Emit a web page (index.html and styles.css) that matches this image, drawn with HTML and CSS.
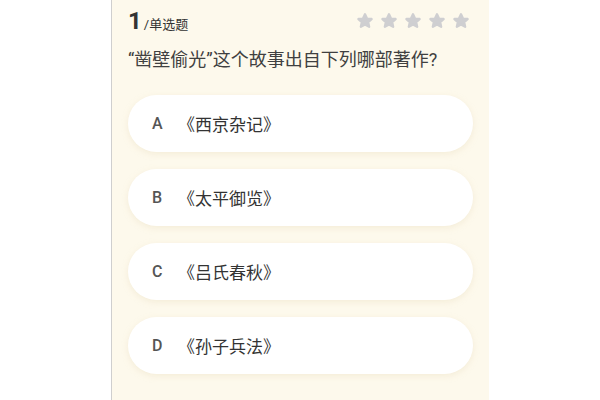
FILE: index.html
```html
<!DOCTYPE html>
<html lang="zh">
<head>
	<meta charset="UTF-8">
	<title>答题</title>
	<link rel="stylesheet" href="styles.css">
</head>
<body>
<div class="panel">
	<div class="head">
		<div class="num"><span class="no">1</span><span class="type">/单选题</span></div>
		<div class="stars">
			<svg class="star" viewBox="0 0 20 20"><path d="M10 2.5 L12.2 7.3 L17.3 7.8 L13.5 11.3 L14.6 16.4 L10 13.8 L5.4 16.4 L6.5 11.3 L2.7 7.8 L7.8 7.3 Z"/></svg>
			<svg class="star" viewBox="0 0 20 20"><path d="M10 2.5 L12.2 7.3 L17.3 7.8 L13.5 11.3 L14.6 16.4 L10 13.8 L5.4 16.4 L6.5 11.3 L2.7 7.8 L7.8 7.3 Z"/></svg>
			<svg class="star" viewBox="0 0 20 20"><path d="M10 2.5 L12.2 7.3 L17.3 7.8 L13.5 11.3 L14.6 16.4 L10 13.8 L5.4 16.4 L6.5 11.3 L2.7 7.8 L7.8 7.3 Z"/></svg>
			<svg class="star" viewBox="0 0 20 20"><path d="M10 2.5 L12.2 7.3 L17.3 7.8 L13.5 11.3 L14.6 16.4 L10 13.8 L5.4 16.4 L6.5 11.3 L2.7 7.8 L7.8 7.3 Z"/></svg>
			<svg class="star" viewBox="0 0 20 20"><path d="M10 2.5 L12.2 7.3 L17.3 7.8 L13.5 11.3 L14.6 16.4 L10 13.8 L5.4 16.4 L6.5 11.3 L2.7 7.8 L7.8 7.3 Z"/></svg>
		</div>
	</div>
	<div class="question">“凿壁偷光”这个故事出自下列哪部著作?</div>
	<ul class="options">
		<li class="option"><span class="letter">A</span><span class="text">《西京杂记》</span></li>
		<li class="option"><span class="letter">B</span><span class="text">《太平御览》</span></li>
		<li class="option"><span class="letter">C</span><span class="text">《吕氏春秋》</span></li>
		<li class="option"><span class="letter">D</span><span class="text">《孙子兵法》</span></li>
	</ul>
</div>
</body>
</html>
```

FILE: styles.css
```css
body,ul,li{
	margin: 0;
	padding: 0;
	list-style: none;
}
body{
	background: #fff;
	font-family: "Roboto", "Noto Sans CJK SC", sans-serif;
}
.panel{
	margin-left: 111px;
	width: 345px;
	height: 400px;
	background: #fdf9ec;
	border-left: 1px solid #cfcfcf;
	padding: 0 16px 0 16px;
}
.head{
	display: flex;
	justify-content: space-between;
	align-items: center;
	height: 40px;
	padding-top: 1px;
}
.num{
	display: flex;
	align-items: baseline;
	color: #333;
}
.no{
	font-size: 24px;
	font-weight: 700;
	line-height: 28px;
}
.type{
	font-size: 13px;
	margin-left: 2px;
}
.stars{
	display: flex;
	gap: 6px;
	margin-right: 3px;
}
.star{
	width: 18px;
	height: 18px;
	fill: #cfcfd1;
	stroke: #cfcfd1;
	stroke-width: 2.6;
	stroke-linejoin: round;
}
.question{
	font-size: 18px;
	color: #404040;
	line-height: 24px;
	margin-top: 7px;
}
.options{
	margin-top: 23px;
	display: flex;
	flex-direction: column;
	gap: 17px;
}
.option{
	height: 57px;
	background: #fff;
	border-radius: 29px;
	box-shadow: 0 2px 6px rgba(230, 215, 180, 0.35);
	display: flex;
	align-items: center;
	padding-left: 24px;
	color: #333;
	font-size: 17px;
}
.letter{
	width: 26px;
	color: #555;
	font-size: 16px;
	font-weight: 500;
}
.text{
	margin-left: 0;
}
```
